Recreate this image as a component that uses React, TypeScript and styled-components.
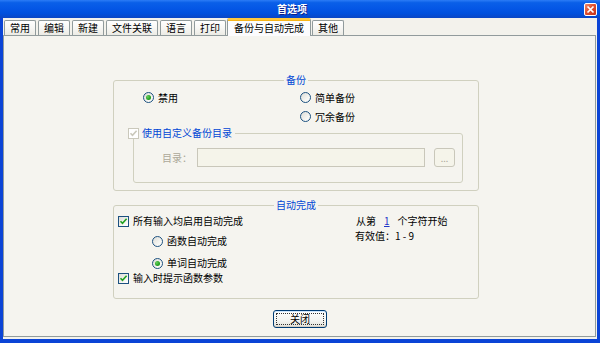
import React from "react";
import styled, { createGlobalStyle, css } from "styled-components";

const FONT = `"Noto Sans CJK SC", "Noto Sans", sans-serif`;
const PANEL_BG = "#F5F4EF";

const Global = createGlobalStyle`
  html, body { margin: 0; padding: 0; background: #ffffff; }
  body { font-family: ${FONT}; font-size: 10px; }
  * { box-sizing: border-box; }
`;

const Window = styled.div`
  width: 600px;
  height: 343px;
  display: flex;
  flex-direction: column;
  background: #0B44D6;
  padding: 0 3px 4px 3px;
  font-family: ${FONT};
  font-size: 10px;
  line-height: 12px;
  color: #000;
`;

const TitleBar = styled.div`
  height: 18px;
  margin: 0 -3px;
  display: flex;
  align-items: center;
  background: linear-gradient(
    to bottom,
    #2C7CF6 0%,
    #0A5FE8 15%,
    #0557E6 45%,
    #0050DD 75%,
    #0A46C4 100%
  );
`;

const Title = styled.div`
  flex: 1;
  text-align: center;
  color: #fff;
  font-weight: bold;
  font-size: 10px;
  text-shadow: 1px 1px 0 #0F1E89;
`;

const CloseBox = styled.div`
  width: 13px;
  height: 13px;
  margin-right: 3px;
  border: 1px solid #fff;
  border-radius: 2px;
  background: linear-gradient(135deg, #F08A6E 0%, #E0502E 45%, #C4331A 100%);
  display: flex;
  align-items: center;
  justify-content: center;
`;

const Client = styled.div`
  flex: 1;
  display: flex;
  flex-direction: column;
  background: #F3F2EC;
  padding: 0 1px 2px 0;
`;

const TabStrip = styled.div`
  height: 17px;
  display: flex;
  align-items: flex-end;
  gap: 2px;
  padding-left: 1px;
  position: relative;
  z-index: 1;
`;

const Tab = styled.div<{ $active?: boolean }>`
  height: 15px;
  padding: 0 5px;
  display: flex;
  align-items: center;
  white-space: nowrap;
  border: 1px solid #919B9C;
  border-bottom: none;
  border-radius: 2px 2px 0 0;
  background: linear-gradient(to bottom, #FFFFFF 0%, #F7F7F4 50%, #ECEBE5 100%);
  ${(p) =>
    p.$active &&
    css`
      height: 18px;
      margin: 0 -1px -1px -1px;
      padding: 0 6px;
      background: #FCFCFE;
      border-top: 2px solid #FFC83C;
      box-shadow: inset 0 1px 0 #F7B51A;
    `}
`;

const TabPanel = styled.div`
  flex: 1;
  border: 1px solid #919B9C;
  background: ${PANEL_BG};
  display: flex;
  flex-direction: column;
  padding: 44px 0 0 109px;
`;

const GroupBox = styled.div<{ $h: number }>`
  position: relative;
  width: 366px;
  height: ${(p) => p.$h}px;
  border: 1px solid #D0D0BF;
  border-radius: 3px;
`;

const GroupTitle = styled.div`
  position: absolute;
  top: -7px;
  left: 50%;
  transform: translateX(-50%);
  padding: 0 2px;
  background: ${PANEL_BG};
  color: #0046D5;
  white-space: nowrap;
`;

const OptionsGrid = styled.div`
  display: grid;
  grid-template-columns: 157px auto;
  grid-auto-rows: 19px;
  padding: 7px 0 0 29px;
`;

const Option = styled.label<{ $col?: number; $disabled?: boolean }>`
  display: flex;
  align-items: center;
  gap: 4px;
  grid-column: ${(p) => p.$col ?? "auto"};
  color: ${(p) => (p.$disabled ? "#ACA899" : "#000")};
  white-space: nowrap;
`;

const RadioCircle = styled.span<{ $checked?: boolean }>`
  width: 11px;
  height: 11px;
  border-radius: 50%;
  border: 1px solid #1C5180;
  background: linear-gradient(135deg, #DCDCD7 0%, #F4F4F0 60%, #FFFFFF 100%);
  display: inline-flex;
  align-items: center;
  justify-content: center;
  flex: none;
  &::after {
    content: "";
    display: ${(p) => (p.$checked ? "block" : "none")};
    width: 5px;
    height: 5px;
    border-radius: 50%;
    background: radial-gradient(circle at 35% 35%, #6ACF5E 0%, #21A121 60%, #1A8A1A 100%);
  }
`;

const CheckBoxBox = styled.span<{ $disabled?: boolean }>`
  width: 11px;
  height: 11px;
  border: 1px solid ${(p) => (p.$disabled ? "#CAC8BB" : "#1C5180")};
  background: ${(p) =>
    p.$disabled ? "#FFFFFF" : "linear-gradient(135deg, #DCDCD7 0%, #F4F4F0 60%, #FFFFFF 100%)"};
  display: inline-flex;
  align-items: center;
  justify-content: center;
  flex: none;
`;

const InnerGroup = styled.div`
  position: relative;
  width: 330px;
  height: 50px;
  margin: 7px 0 0 19px;
  border: 1px solid #D0D0BF;
  border-radius: 3px;
`;

const InnerLegend = styled.label`
  position: absolute;
  top: -7px;
  left: -6px;
  padding-right: 3px;
  background: ${PANEL_BG};
  display: flex;
  align-items: center;
  gap: 3px;
  color: #0046D5;
  white-space: nowrap;
`;

const DirRow = styled.div`
  display: flex;
  align-items: center;
  padding: 14px 0 0 28px;
`;

const DirLabel = styled.span`
  width: 35px;
  color: #ACA899;
`;

const DirInput = styled.div`
  width: 228px;
  height: 19px;
  border: 1px solid #C9C7BA;
  background: #F5F4EA;
`;

const BrowseButton = styled.div`
  width: 21px;
  height: 19px;
  margin-left: 9px;
  border: 1px solid #C9C7BA;
  border-radius: 3px;
  background: #F5F4EA;
  color: #ACA899;
  display: flex;
  align-items: flex-end;
  justify-content: center;
  font-size: 9px;
  line-height: 14px;
  letter-spacing: 0px;
`;

const Group2Body = styled.div`
  display: flex;
`;

const LeftCol = styled.div`
  width: 242px;
  padding: 8px 0 0 4px;
  display: flex;
  flex-direction: column;
`;

const Row = styled.label<{ $indent?: number; $gap?: number }>`
  height: 14px;
  display: flex;
  align-items: center;
  gap: 4px;
  padding-left: ${(p) => p.$indent ?? 0}px;
  margin-top: ${(p) => p.$gap ?? 0}px;
  white-space: nowrap;
`;

const RightCol = styled.div`
  padding-top: 7px;
  display: flex;
  flex-direction: column;
`;

const InfoLine = styled.div<{ $shift?: number }>`
  height: 15px;
  display: flex;
  align-items: center;
  margin-left: ${(p) => p.$shift ?? 0}px;
  white-space: nowrap;
`;

const Num = styled.span`
  color: #1E36C8;
  text-decoration: underline;
  margin: 0 8px;
`;

const ButtonRow = styled.div`
  display: flex;
  justify-content: center;
  margin: 11px 0 0 -108px;
`;

const PushButton = styled.button`
  width: 54px;
  height: 18px;
  padding: 2px;
  border: 1px solid #003C74;
  border-radius: 3px;
  background: linear-gradient(to bottom, #FFFFFF 0%, #F4F4F0 60%, #E3E2DA 100%);
  box-shadow: inset 0 -1px 0 #D6D0C5, inset 0 1px 0 #CEE7FF;
  font-family: ${FONT};
  font-size: 10px;
  line-height: 12px;
  color: #000;
  display: flex;
`;

const FocusRing = styled.span`
  flex: 1;
  border: 1px dotted #333;
  display: flex;
  align-items: center;
  justify-content: center;
`;

const Check = ({ disabled }: { disabled?: boolean }) => (
  <CheckBoxBox $disabled={disabled}>
    <svg width="9" height="9" viewBox="0 0 9 9">
      <path
        d="M1.5 4.2 L3.5 6.3 L7.6 1.8"
        fill="none"
        stroke={disabled ? "#CAC8BB" : "#21A121"}
        strokeWidth="1.6"
      />
    </svg>
  </CheckBoxBox>
);

const tabs = ["常用", "编辑", "新建", "文件关联", "语言", "打印", "备份与自动完成", "其他"];

export default function App() {
  return (
    <>
      <Global />
      <Window>
        <TitleBar>
          <Title>首选项</Title>
          <CloseBox>
            <svg width="9" height="9" viewBox="0 0 9 9">
              <path d="M1.5 1.5 L7.5 7.5 M7.5 1.5 L1.5 7.5" stroke="#fff" strokeWidth="1.7" />
            </svg>
          </CloseBox>
        </TitleBar>
        <Client>
          <TabStrip>
            {tabs.map((t) => (
              <Tab key={t} $active={t === "备份与自动完成"}>
                {t}
              </Tab>
            ))}
          </TabStrip>
          <TabPanel>
            <GroupBox $h={111}>
              <GroupTitle>备份</GroupTitle>
              <OptionsGrid>
                <Option $col={1}>
                  <RadioCircle $checked />
                  禁用
                </Option>
                <Option $col={2}>
                  <RadioCircle />
                  简单备份
                </Option>
                <Option $col={2}>
                  <RadioCircle />
                  冗余备份
                </Option>
              </OptionsGrid>
              <InnerGroup>
                <InnerLegend>
                  <Check disabled />
                  使用自定义备份目录
                </InnerLegend>
                <DirRow>
                  <DirLabel>目录：</DirLabel>
                  <DirInput />
                  <BrowseButton>...</BrowseButton>
                </DirRow>
              </InnerGroup>
            </GroupBox>
            <GroupBox $h={94} style={{ marginTop: 14 }}>
              <GroupTitle>自动完成</GroupTitle>
              <Group2Body>
                <LeftCol>
                  <Row>
                    <Check />
                    所有输入均启用自动完成
                  </Row>
                  <Row $indent={34} $gap={6}>
                    <RadioCircle />
                    函数自动完成
                  </Row>
                  <Row $indent={34} $gap={8}>
                    <RadioCircle $checked />
                    单词自动完成
                  </Row>
                  <Row $gap={1}>
                    <Check />
                    输入时提示函数参数
                  </Row>
                </LeftCol>
                <RightCol>
                  <InfoLine>
                    从第<Num>1</Num>个字符开始
                  </InfoLine>
                  <InfoLine $shift={-1}>有效值：1 - 9</InfoLine>
                </RightCol>
              </Group2Body>
            </GroupBox>
            <ButtonRow>
              <PushButton>
                <FocusRing>关闭</FocusRing>
              </PushButton>
            </ButtonRow>
          </TabPanel>
        </Client>
      </Window>
    </>
  );
}
